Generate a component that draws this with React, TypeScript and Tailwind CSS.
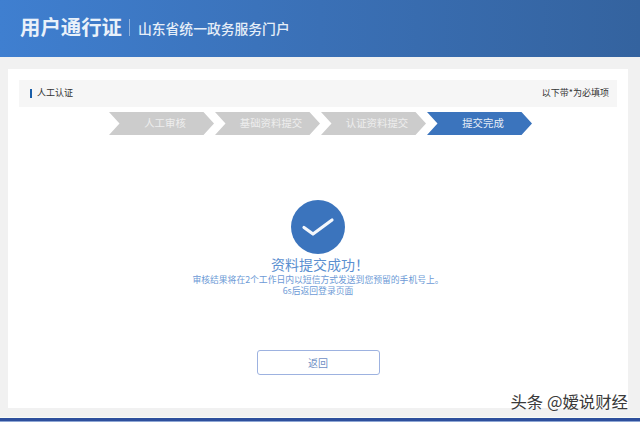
import React from 'react';

const font = "font-['Noto_Sans_CJK_SC','Liberation_Sans',sans-serif]";

const Step: React.FC<{ label: string; active?: boolean }> = ({ label, active }) => (
  <div
    className={`w-[105px] h-[23px] flex items-center justify-center pl-[7px] pb-[1px] text-[10.4px] [clip-path:polygon(0_0,90%_0,100%_50%,90%_100%,0_100%,10%_50%)] ${
      active ? 'bg-[#3b74bd] text-[#e8eff8]' : 'bg-[#cccccc] text-[#eeeeee]'
    }`}
  >
    {label}
  </div>
);

const App: React.FC = () => {
  return (
    <div className={`w-[640px] h-[422px] overflow-hidden flex flex-col bg-[#f1f1f1] relative ${font}`}>
      <header className="h-[57px] shrink-0 flex items-center pl-[20px] pb-[2px] bg-gradient-to-r from-[#3f7fd0] via-[#3a70b6] to-[#34639f]">
        <span className="text-[20.4px] leading-none font-bold text-[#e9f1fa] mb-[2px]">用户通行证</span>
        <span className="w-px h-[17px] bg-[#8fb2dd] ml-[7px] mr-[8px]" />
        <span className="text-[13.8px] leading-none font-medium text-[#e6eef8] mt-[3px]">山东省统一政务服务门户</span>
      </header>

      <main className="mt-[12px] ml-[8px] w-[620px] h-[339px] bg-white flex flex-col items-center px-[11px] pt-[11px]">
        <div className="w-full h-[27px] shrink-0 flex items-center justify-between bg-[#f6f6f6] pl-[11px] pr-[8px] pb-[1px] text-[9px] text-[#333333]">
          <div className="flex items-center gap-[5px]">
            <span className="w-[2px] h-[9px] bg-[#1a5ea8]" />
            <span>人工认证</span>
          </div>
          <span>以下带*为必填项</span>
        </div>

        <div className="mt-[5px] flex gap-[1px] self-start ml-[90px]">
          <Step label="人工审核" />
          <Step label="基础资料提交" />
          <Step label="认证资料提交" />
          <Step label="提交完成" active />
        </div>

        <div className="mt-[65px] w-[54px] h-[54px] rounded-full bg-[#3b74bd] flex items-center justify-center">
          <svg width="34" height="22" viewBox="0 0 34 22" fill="none">
            <path d="M3 11.5 L12 18 L31 4" stroke="#f4f7fb" strokeWidth="3.2" strokeLinecap="round" strokeLinejoin="round" />
          </svg>
        </div>
        <div className="mt-[1px] pl-[4px] text-[14px] leading-[18px] text-[#5b8fd0]">资料提交成功！</div>
        <div className="mt-[1px] text-[8.8px] leading-[11px] text-[#6d9ad6] text-center">
          <div>审核结果将在2个工作日内以短信方式发送到您预留的手机号上。</div>
          <div>6s后返回登录页面</div>
        </div>

        <button className="mt-[54px] w-[123px] h-[25px] rounded-[3px] border border-[#9db2e0] bg-white text-[10px] text-[#6f8fc4] flex items-center justify-center">
          返回
        </button>
      </main>

      <div className="absolute left-0 right-0 top-[417px] h-px bg-[#f7fbf7]" />
      <div className="absolute left-0 right-0 top-[418px] h-[3px] bg-[#2e4f9c]" />
      <div className="absolute left-0 right-0 top-[421px] h-px bg-[#8ea6d4]" />

      <div className="absolute right-[12px] top-[390px] text-[16.4px] leading-[22px] text-[#3a3a3a] [text-shadow:0_0_2px_white]">
        头条 @嫒说财经
      </div>
    </div>
  );
};

export default App;
